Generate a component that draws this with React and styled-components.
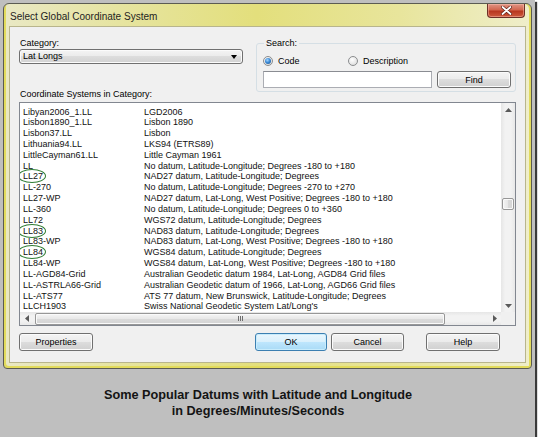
import React from "react";
import styled, { createGlobalStyle } from "styled-components";

const UI_FONT = `"Liberation Sans Narrow", "Liberation Sans", Arial, sans-serif`;

const GlobalStyle = createGlobalStyle`
  html, body {
    margin: 0;
    padding: 0;
    background: #ffffff;
  }
  body {
    font-family: ${UI_FONT};
    font-size: 9px;
    color: #000;
  }
  * { box-sizing: border-box; }
`;

const rows = [
  ["Libyan2006_1.LL", "LGD2006"],
  ["Lisbon1890_1.LL", "Lisbon 1890"],
  ["Lisbon37.LL", "Lisbon"],
  ["Lithuania94.LL", "LKS94 (ETRS89)"],
  ["LittleCayman61.LL", "Little Cayman 1961"],
  ["LL", "No datum, Latitude-Longitude; Degrees -180 to +180"],
  ["LL27", "NAD27 datum, Latitude-Longitude; Degrees", true],
  ["LL-270", "No datum, Latitude-Longitude; Degrees -270 to +270"],
  ["LL27-WP", "NAD27 datum, Lat-Long, West Positive; Degrees -180 to +180"],
  ["LL-360", "No datum, Latitude-Longitude; Degrees 0 to +360"],
  ["LL72", "WGS72 datum, Latitude-Longitude; Degrees"],
  ["LL83", "NAD83 datum, Latitude-Longitude; Degrees", true],
  ["LL83-WP", "NAD83 datum, Lat-Long, West Positive; Degrees -180 to +180"],
  ["LL84", "WGS84 datum, Latitude-Longitude; Degrees", true],
  ["LL84-WP", "WGS84 datum, Lat-Long, West Positive; Degrees -180 to +180"],
  ["LL-AGD84-Grid", "Australian Geodetic datum 1984, Lat-Long, AGD84 Grid files"],
  ["LL-ASTRLA66-Grid", "Australian Geodetic datum of 1966, Lat-Long, AGD66 Grid files"],
  ["LL-ATS77", "ATS 77 datum, New Brunswick, Latitude-Longitude; Degrees"],
  ["LLCH1903", "Swiss National Geodetic System Lat/Long's"],
];

const Figure = styled.div`
  width: 535px;
  height: 437px;
  background: #bfbfbf;
  box-shadow: 2px 2px 1px #3a3a3a;
  padding: 3px 0 0 3px;
  display: flex;
  flex-direction: column;
`;

const Window = styled.div`
  width: 529px;
  height: 366px;
  border: 1px solid #5b5b52;
  border-radius: 6px 6px 4px 4px;
  background: linear-gradient(
    90deg,
    #e9e8c4 0%,
    #e6e4a0 22%,
    #e3df7c 48%,
    #e8e59c 75%,
    #efeecb 100%
  );
  box-shadow: inset 2px -2px 0 #e2db5c, inset -2px 0 0 #e2db5c;
  padding: 0 6px 6px 6px;
  display: flex;
  flex-direction: column;
`;

const TitleBar = styled.div`
  height: 23px;
  display: flex;
  align-items: flex-start;
`;

const Title = styled.div`
  padding-top: 6px;
  line-height: 13px;
  font-size: 10px;
  color: #1e1e1e;
`;

const CloseButton = styled.div`
  margin-left: auto;
  width: 38px;
  height: 14px;
  border: 1px solid #6d2f27;
  border-top: none;
  border-radius: 0 0 4px 4px;
  background: linear-gradient(#e09585 0%, #d2664f 45%, #b8361f 55%, #cc5a3e 100%);
  box-shadow: inset 0 0 0 1px rgba(255, 200, 185, 0.45);
  display: flex;
  align-items: center;
  justify-content: center;
`;

const Client = styled.div`
  width: 515px;
  height: 335px;
  background: #f0f0f0;
  box-shadow: 0 0 0 1px #b8b58c;
  padding: 10px 10px 0 9px;
  display: flex;
  flex-direction: column;
`;

const TopSection = styled.div`
  display: grid;
  grid-template-columns: 224px 260px;
  grid-template-rows: 12px 15px 24px 12px;
  column-gap: 13px;
`;

const Label = styled.div`
  line-height: 12px;
  padding-left: 1px;
  grid-column: 1;
  grid-row: ${(p) => p.row};
`;

const Combo = styled.div`
  grid-column: 1;
  grid-row: 2;
  border: 1px solid #707070;
  border-radius: 3px;
  background: linear-gradient(#f4f4f4 0%, #ebebeb 50%, #dddddd 50%, #d2d2d2 100%);
  box-shadow: inset 0 0 0 1px #fbfbfb;
  display: flex;
  align-items: center;
  padding: 0 5px 0 3px;
  line-height: 13px;
`;

const ComboArrow = styled.span`
  margin-left: auto;
  width: 0;
  height: 0;
  border-left: 3.5px solid transparent;
  border-right: 3.5px solid transparent;
  border-top: 4px solid #000;
`;

const SearchGroup = styled.fieldset`
  grid-column: 2;
  grid-row: 1 / 5;
  height: 55px;
  margin: 0;
  padding: 0 4px 3px 6px;
  border: 1px solid #d5dfe5;
  border-radius: 3px;
  min-width: 0;
  display: flex;
  flex-direction: column;
`;

const Legend = styled.legend`
  padding: 0 2px;
  margin-left: 1px;
  line-height: 12px;
`;

const RadioRow = styled.div`
  display: flex;
  align-items: center;
  height: 12px;
  margin-top: 6px;
`;

const RadioOption = styled.label`
  display: flex;
  align-items: center;
  gap: 5px;
  width: ${(p) => p.width}px;
  line-height: 12px;
`;

const RadioDot = styled.span`
  width: 10px;
  height: 10px;
  border-radius: 50%;
  border: 1px solid #8a8c8e;
  background: radial-gradient(circle at 40% 35%, #ffffff 0%, #e6e6e6 60%, #d2d2d2 100%);
  display: flex;
  align-items: center;
  justify-content: center;
  &::after {
    content: "";
    display: ${(p) => (p.checked ? "block" : "none")};
    width: 6px;
    height: 6px;
    border-radius: 50%;
    background: radial-gradient(circle at 40% 35%, #a8d8ff 0%, #3b8ad6 45%, #1c4f86 100%);
  }
`;

const FindRow = styled.div`
  display: flex;
  gap: 5px;
  margin-top: 4px;
`;

const TextInput = styled.div`
  width: 169px;
  height: 17px;
  background: #ffffff;
  border: 1px solid #abadb3;
  border-top-color: #8a8c92;
`;

const Button = styled.div`
  width: ${(p) => p.width}px;
  height: ${(p) => p.height || 18}px;
  margin-left: ${(p) => p.gap || 0}px;
  border: 1px solid ${(p) => (p.primary ? "#3c7fb1" : "#707070")};
  border-radius: 3px;
  background: ${(p) =>
    p.primary
      ? "linear-gradient(#eaf6fd 0%, #d9f0fc 50%, #bee6fd 50%, #a9dbf6 100%)"
      : "linear-gradient(#f4f4f4 0%, #ebebeb 50%, #dddddd 50%, #d0d0d0 100%)"};
  box-shadow: inset 0 0 0 1px ${(p) => (p.primary ? "#c8ecfc" : "#fbfbfb")};
  display: flex;
  align-items: center;
  justify-content: center;
  line-height: 12px;
`;

const ListBox = styled.div`
  margin-top: 2px;
  width: 497px;
  height: 224px;
  border: 1px solid #828790;
  background: #ffffff;
  display: grid;
  grid-template-columns: 1fr 14px;
  grid-template-rows: 1fr 13px;
`;

const ListContent = styled.div`
  overflow: hidden;
  padding: 3.5px 0 0 3px;
`;

const Row = styled.div`
  display: grid;
  grid-template-columns: 121px auto;
  height: 10.83px;
  line-height: 10.83px;
  white-space: nowrap;
  font-size: 9px;
  color: #111;
`;

const Circled = styled.span`
  position: relative;
  &::after {
    content: "";
    position: absolute;
    left: -5px;
    right: -3px;
    top: -2px;
    bottom: -2px;
    border: 1.6px solid #2f7d33;
    border-radius: 50%;
  }
`;

const ScrollTrack = styled.div`
  background: ${(p) =>
    p.vertical
      ? "linear-gradient(90deg, #e6e6e6, #f2f2f2 30%, #f2f2f2 70%, #e8e8e8)"
      : "linear-gradient(#e6e6e6, #f2f2f2 30%, #f2f2f2 70%, #e8e8e8)"};
  display: flex;
  flex-direction: ${(p) => (p.vertical ? "column" : "row")};
  align-items: center;
`;

const ArrowButton = styled.div`
  width: 13px;
  height: 13px;
  flex: none;
  display: flex;
  align-items: center;
  justify-content: center;
`;

const Thumb = styled.div`
  flex: none;
  border: 1px solid #979797;
  border-radius: 2px;
  background: ${(p) =>
    p.vertical
      ? "linear-gradient(90deg, #f5f5f5, #e7e7e7 50%, #dadada 50%, #d4d4d4)"
      : "linear-gradient(#f5f5f5, #e7e7e7 50%, #dadada 50%, #d4d4d4)"};
  box-shadow: inset 0 0 0 1px #fafafa;
  display: flex;
  align-items: center;
  justify-content: center;
`;

const Grip = styled.span`
  width: 5px;
  height: 5px;
  background: repeating-linear-gradient(90deg, #6e6e6e 0 1px, transparent 1px 2px);
`;

const Spacer = styled.div`
  flex: 1;
`;

const Corner = styled.div`
  background: #f0f0f0;
`;

const ButtonRow = styled.div`
  margin-top: 7px;
  display: flex;
  padding-right: 15px;
`;

const Caption = styled.div`
  margin-top: 18px;
  width: 510px;
  text-align: center;
  font-family: "Liberation Sans", Arial, sans-serif;
  font-weight: bold;
  font-size: 12.7px;
  line-height: 16px;
  color: #141414;
`;

const Tri = ({ dir }) => {
  const pts = {
    up: "0,4 3.5,0 7,4",
    down: "0,0 3.5,4 7,0",
    left: "4,0 0,3.5 4,7",
    right: "0,0 4,3.5 0,7",
  }[dir];
  const w = dir === "up" || dir === "down" ? 7 : 4;
  const h = dir === "up" || dir === "down" ? 4 : 7;
  return (
    <svg width={w} height={h} viewBox={`0 0 ${w} ${h}`}>
      <polygon points={pts} fill="#5a5a5a" />
    </svg>
  );
};

export default function App() {
  return (
    <>
      <GlobalStyle />
      <Figure>
        <Window>
          <TitleBar>
            <Title>Select Global Coordinate System</Title>
            <CloseButton>
              <svg width="11" height="9" viewBox="0 0 11 9">
                <path d="M1.5 1 L9.5 8 M9.5 1 L1.5 8" stroke="#5a1c14" strokeWidth="3.2" strokeLinecap="round" />
                <path d="M1.5 1 L9.5 8 M9.5 1 L1.5 8" stroke="#ffffff" strokeWidth="1.8" strokeLinecap="round" />
              </svg>
            </CloseButton>
          </TitleBar>
          <Client>
            <TopSection>
              <Label row={1}>Category:</Label>
              <Combo>
                Lat Longs
                <ComboArrow />
              </Combo>
              <SearchGroup>
                <Legend>Search:</Legend>
                <RadioRow>
                  <RadioOption width={85}>
                    <RadioDot checked />
                    Code
                  </RadioOption>
                  <RadioOption width={80}>
                    <RadioDot />
                    Description
                  </RadioOption>
                </RadioRow>
                <FindRow>
                  <TextInput />
                  <Button width={74} height={17}>Find</Button>
                </FindRow>
              </SearchGroup>
              <Label row={4}>Coordinate Systems in Category:</Label>
            </TopSection>

            <ListBox>
              <ListContent>
                {rows.map(([code, desc, circled]) => (
                  <Row key={code}>
                    <span>{circled ? <Circled>{code}</Circled> : code}</span>
                    <span>{desc}</span>
                  </Row>
                ))}
              </ListContent>
              <ScrollTrack vertical>
                <ArrowButton>
                  <Tri dir="up" />
                </ArrowButton>
                <Thumb vertical style={{ width: 12, height: 12, marginTop: 82 }} />
                <Spacer />
                <ArrowButton>
                  <Tri dir="down" />
                </ArrowButton>
              </ScrollTrack>
              <ScrollTrack>
                <ArrowButton>
                  <Tri dir="left" />
                </ArrowButton>
                <Thumb style={{ width: 410, height: 12, marginLeft: 2 }}>
                  <Grip />
                </Thumb>
                <Spacer />
                <ArrowButton>
                  <Tri dir="right" />
                </ArrowButton>
              </ScrollTrack>
              <Corner />
            </ListBox>

            <ButtonRow>
              <Button width={74}>Properties</Button>
              <Spacer />
              <Button width={72} primary>OK</Button>
              <Button width={73} gap={4}>Cancel</Button>
              <Button width={74} gap={22}>Help</Button>
            </ButtonRow>
          </Client>
        </Window>
        <Caption>
          Some Popular Datums with Latitude and Longitude
          <br />
          in Degrees/Minutes/Seconds
        </Caption>
      </Figure>
    </>
  );
}
